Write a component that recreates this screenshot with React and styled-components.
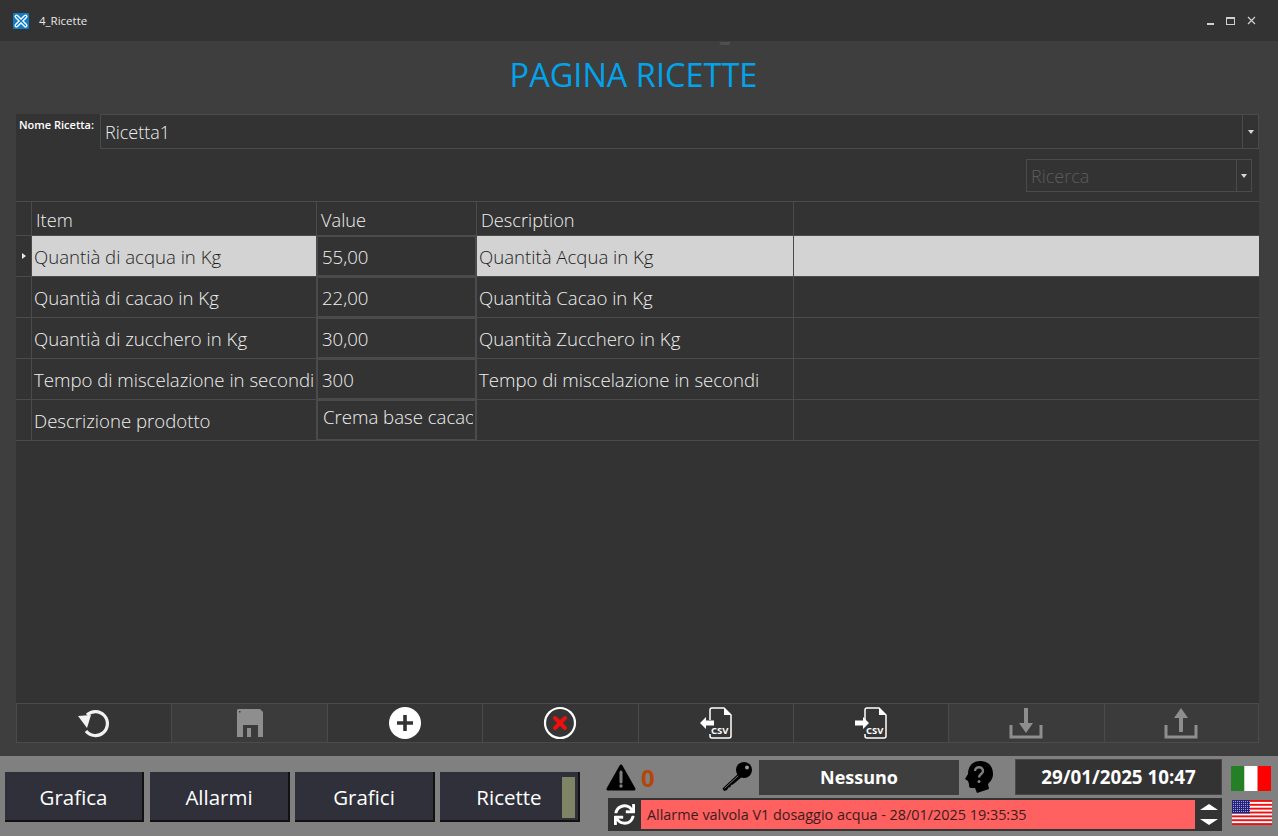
import React from 'react';
import styled, { createGlobalStyle } from 'styled-components';
import { FaSync } from 'react-icons/fa';

const GlobalStyle = createGlobalStyle`
	* {
		box-sizing: border-box;
	}
	html,
	body {
		margin: 0;
		height: 100%;
		overflow: hidden;
		background: #3e3e3e;
		font-family: 'Open Sans', 'Noto Sans', sans-serif;
	}
`;

const rows = [
	{ item: 'Quantià di acqua in Kg', value: '55,00', description: 'Quantità Acqua in Kg' },
	{ item: 'Quantià di cacao in Kg', value: '22,00', description: 'Quantità Cacao in Kg' },
	{ item: 'Quantià di zucchero in Kg', value: '30,00', description: 'Quantità Zucchero in Kg' },
	{ item: 'Tempo di miscelazione in secondi', value: '300', description: 'Tempo di miscelazione in secondi' },
	{ item: 'Descrizione prodotto', value: 'Crema base cacao', description: '' },
];

function LogoIcon() {
	return (
		<svg width="16" height="16" viewBox="0 0 16 16">
			<rect width="16" height="16" rx="1" fill="#0f7cc6" />
			<path d="M3.500 3.500l9 9M12.500 3.500l-9 9" stroke="#fff" strokeWidth="4" strokeLinecap="round" />
			<path d="M3.500 3.500l9 9M12.500 3.500l-9 9" stroke="#0f7cc6" strokeWidth="1.400" strokeLinecap="round" />
		</svg>
	);
}

function UndoIcon() {
	return (
		<svg width="34" height="32" viewBox="0 0 34 32">
			<path d="M10 8a12 12 0 1 1-1 16" fill="none" stroke="#f2f2f2" strokeWidth="3.2" />
			<path d="M1 9l13-1-4 13z" fill="#f2f2f2" />
		</svg>
	);
}

function SaveIcon() {
	return (
		<svg width="28" height="30" viewBox="0 0 28 30">
			<path d="M2 1h22l3 3v25H1V2z" fill="#8e8e8e" />
			<rect x="7" y="17" width="15" height="12" fill="#3b3b3b" />
			<rect x="11" y="20" width="4" height="9" fill="#8e8e8e" />
			<rect x="3" y="3" width="1.5" height="1.5" fill="#3b3b3b" />
		</svg>
	);
}

function PlusIcon() {
	return (
		<svg width="34" height="34" viewBox="0 0 34 34">
			<circle cx="17" cy="17" r="16" fill="#fff" />
			<path d="M17 9v16M9 17h16" stroke="#333" strokeWidth="3.6" />
		</svg>
	);
}

function RemoveIcon() {
	return (
		<svg width="34" height="34" viewBox="0 0 34 34">
			<circle cx="17" cy="17" r="15" fill="none" stroke="#fff" strokeWidth="2.2" />
			<path d="M12 12l10 10M22 12L12 22" stroke="#ee0f0f" strokeWidth="4" strokeLinecap="round" />
		</svg>
	);
}

function CsvIcon({ direction }) {
	return (
		<svg width="34" height="34" viewBox="0 0 34 34">
			<path
				d="M11 14V4a2 2 0 0 1 2-2h12l7 7v21a2 2 0 0 1-2 2H13a2 2 0 0 1-2-2v-2"
				fill="none"
				stroke="#fff"
				strokeWidth="1.5"
			/>
			<path d="M25 2v7h7z" fill="#fff" />
			{direction === 'in' ? (
				<path d="M1 17l6-6v3.500h8v5H7V23z" fill="#fff" />
			) : (
				<path d="M15 17l-6-6v3.500H1v5h8V23z" fill="#fff" />
			)}
			<text x="12" y="28" fontSize="9.500" fontWeight="700" fill="#fff" fontFamily="'Open Sans', sans-serif">
				CSV
			</text>
		</svg>
	);
}

function TrayIcon({ up }) {
	return (
		<svg width="34" height="32" viewBox="0 0 34 32">
			<path d="M2 18v12h30V18" fill="none" stroke="#8e8e8e" strokeWidth="3" />
			{up ? (
				<path d="M17 1l7 10h-5v14h-4V11h-5z" fill="#8e8e8e" />
			) : (
				<path d="M17 26l-7-10h5V1h4v15h5z" fill="#8e8e8e" />
			)}
		</svg>
	);
}

function WarningIcon() {
	return (
		<svg width="30" height="27" viewBox="0 0 30 27">
			<path d="M15 2L2 25h26z" fill="#000" stroke="#000" strokeWidth="3" strokeLinejoin="round" />
			<path d="M15 8v10" stroke="#808080" strokeWidth="3" strokeLinecap="round" />
			<circle cx="15" cy="22" r="1.700" fill="#808080" />
		</svg>
	);
}

function KeyIcon() {
	return (
		<svg width="32" height="32" viewBox="0 0 32 32">
			<path d="M19 11L1.500 27.500 3 30l3-1 1.500-2.500 2-.5.5-2 2-.5L23 14z" fill="#000" />
			<path d="M3.500 27.500L18 14" stroke="#808080" strokeWidth="0.9" />
			<circle cx="23" cy="9" r="8" fill="#000" />
			<circle cx="26" cy="6.500" r="2" fill="#9a9a9a" />
		</svg>
	);
}

function HeadIcon() {
	return (
		<svg width="28" height="32" viewBox="0 0 28 32">
			<path
				d="M15 0C23 0 28 5 28 13c0 5-3 8-5 10l1 5-12 4-2-5H6c-2 0-2-2-2-4l-1-3-3-2 3-5C3 5 8 0 15 0z"
				fill="#000"
			/>
			<path d="M10 10c0-5 8-5 8 0 0 3-4 3-4 6.500" fill="none" stroke="#808080" strokeWidth="2.400" />
			<circle cx="14" cy="20.500" r="1.500" fill="#808080" />
		</svg>
	);
}

function ItalianFlag() {
	return (
		<svg width="40" height="25" viewBox="0 0 3 2" preserveAspectRatio="none">
			<rect width="1" height="2" fill="#248024" />
			<rect x="1" width="1" height="2" fill="#fff" />
			<rect x="2" width="1" height="2" fill="#ff0000" />
		</svg>
	);
}

function UsFlag() {
	const stripes = [0, 1, 2, 3, 4, 5, 6];
	const stars = [];
	for (let y = 0; y < 6; y++) {
		for (let x = 0; x < 9; x++) {
			stars.push(<circle key={`${x}-${y}`} cx={1.5 + x * 2} cy={1.4 + y * 2} r="0.5" fill="#c9c9e8" />);
		}
	}
	return (
		<svg width="40" height="25" viewBox="0 0 40 25" preserveAspectRatio="none">
			<rect width="40" height="25" fill="#fff" />
			{stripes.map((i) => (
				<rect key={i} y={i * 3.85} width="40" height="1.920" fill="#f01010" />
			))}
			<rect width="18" height="13.500" fill="#23237e" />
			{stars}
		</svg>
	);
}

function App() {
	return (
		<Page>
			<GlobalStyle />
			<TitleBar>
				<LogoIcon />
				<WindowTitle>4_Ricette</WindowTitle>
				<WindowControls>
					<Minimize />
					<Maximize />
					<svg width="9" height="9" viewBox="0 0 9 9">
						<path d="M1 1l7 7M8 1L1 8" stroke="#d0d0d0" strokeWidth="1.200" />
					</svg>
				</WindowControls>
			</TitleBar>

			<Main>
				<PageTitle>PAGINA RICETTE</PageTitle>
				<Panel>
					<RecipeRow>
						<RecipeLabel>Nome Ricetta:</RecipeLabel>
						<Combo>
							<ComboText>Ricetta1</ComboText>
							<ComboArrow />
						</Combo>
					</RecipeRow>
					<SearchRow>
						<SearchCombo>
							<SearchText>Ricerca</SearchText>
							<ComboArrow $small />
						</SearchCombo>
					</SearchRow>
					<Table>
						<HeaderRow>
							<RowMark />
							<HeaderCell>Item</HeaderCell>
							<HeaderCell>Value</HeaderCell>
							<HeaderCell>Description</HeaderCell>
							<HeaderCell />
						</HeaderRow>
						{rows.map((row, index) => (
							<Row key={row.item}>
								<RowMark>{index === 0 && <Caret />}</RowMark>
								<Cell $selected={index === 0}>{row.item}</Cell>
								<ValueCell $top={index === 4}>
									<ValueText>{row.value}</ValueText>
								</ValueCell>
								<Cell $selected={index === 0}>{row.description}</Cell>
								<Cell $selected={index === 0} />
							</Row>
						))}
					</Table>
				</Panel>
				<Toolbar>
					<ToolButton><UndoIcon /></ToolButton>
					<ToolButton $disabled><SaveIcon /></ToolButton>
					<ToolButton><PlusIcon /></ToolButton>
					<ToolButton><RemoveIcon /></ToolButton>
					<ToolButton><CsvIcon direction="in" /></ToolButton>
					<ToolButton><CsvIcon direction="out" /></ToolButton>
					<ToolButton $disabled><TrayIcon /></ToolButton>
					<ToolButton $disabled><TrayIcon up /></ToolButton>
				</Toolbar>
			</Main>

			<BottomBar>
				<NavGroup>
					<NavButton>Grafica</NavButton>
					<NavButton>Allarmi</NavButton>
					<NavButton>Grafici</NavButton>
					<NavButton $active>
						Ricette
						<ActiveMark />
					</NavButton>
				</NavGroup>
				<StatusArea>
					<StatusRow>
						<WarningIcon />
						<AlarmCount>0</AlarmCount>
						<KeySlot><KeyIcon /></KeySlot>
						<UserBox>Nessuno</UserBox>
						<HeadSlot><HeadIcon /></HeadSlot>
						<DateBox>29/01/2025 10:47</DateBox>
					</StatusRow>
					<AlarmRow>
						<RefreshSlot><FaSync size={21} color="#fff" /></RefreshSlot>
						<AlarmText>Allarme valvola V1 dosaggio acqua - 28/01/2025 19:35:35</AlarmText>
						<ScrollSlot>
							<ScrollArrow />
							<ScrollArrow $down />
						</ScrollSlot>
					</AlarmRow>
				</StatusArea>
				<Flags>
					<ItalianFlag />
					<UsFlag />
				</Flags>
			</BottomBar>
		</Page>
	);
}
export default App;

const Page = styled.div`
	width: 1278px;
	height: 836px;
	display: flex;
	flex-direction: column;
	overflow: hidden;
`;
const TitleBar = styled.div`
	height: 41px;
	flex-shrink: 0;
	display: flex;
	align-items: center;
	padding: 0 22px 0 13px;
	background-color: #333333;
`;
const WindowTitle = styled.span`
	margin-left: 10px;
	font-size: 11.5px;
	color: #e8e8e8;
`;
const WindowControls = styled.div`
	margin-left: auto;
	display: flex;
	align-items: center;
	gap: 12px;
`;
const Minimize = styled.div`
	width: 7px;
	height: 2px;
	margin-top: 6px;
	background-color: #d0d0d0;
`;
const Maximize = styled.div`
	width: 9px;
	height: 8px;
	border: 1px solid #d0d0d0;
	border-top-width: 2px;
`;
const Main = styled.div`
	flex: 1;
	min-height: 0;
	display: flex;
	flex-direction: column;
	padding: 0 19px 13px 16px;
	background-color: #3e3e3e;
`;
const PageTitle = styled.h1`
	position: relative;
	height: 73px;
	margin: 0;
	padding-right: 8px;
	flex-shrink: 0;
	text-align: center;
	line-height: 68px;
	font-size: 32.5px;
	font-weight: 400;
	color: #03a3ea;
	&::before {
		content: '';
		position: absolute;
		left: 703px;
		top: 1px;
		width: 12px;
		height: 3px;
		background-color: #4f4f4f;
		clip-path: polygon(0 0, 100% 0, 85% 100%, 15% 100%);
	}
`;
const Panel = styled.div`
	flex: 1;
	min-height: 0;
	background-color: #333333;
`;
const RecipeRow = styled.div`
	height: 35px;
	display: flex;
`;
const RecipeLabel = styled.label`
	width: 84px;
	padding: 3px 0 0 3px;
	font-size: 11px;
	font-weight: 600;
	white-space: nowrap;
	color: #ffffff;
`;
const Combo = styled.div`
	flex: 1;
	display: flex;
	align-items: center;
	border: 1px solid #4b4b4b;
`;
const ComboText = styled.span`
	flex: 1;
	padding: 1px 0 0 4px;
	font-size: 18px;
	font-weight: 300;
	color: #ececec;
`;
const ComboArrow = styled.div`
	position: relative;
	align-self: stretch;
	width: ${(props) => (props.$small ? '15px' : '16px')};
	border-left: 1px solid #4b4b4b;
	&::after {
		content: '';
		position: absolute;
		left: 50%;
		top: 50%;
		margin: -2px 0 0 -3px;
		border-left: 3px solid transparent;
		border-right: 3px solid transparent;
		border-top: 4px solid #d8d8d8;
	}
`;
const SearchRow = styled.div`
	height: 52px;
	display: flex;
	justify-content: flex-end;
	padding: 10px 7px 9px 0;
`;
const SearchCombo = styled.div`
	width: 226px;
	display: flex;
	align-items: center;
	border: 1px solid #4b4b4b;
`;
const SearchText = styled.span`
	flex: 1;
	padding: 1px 0 0 4px;
	font-size: 18px;
	font-weight: 300;
	color: #5c5c5c;
`;
const Table = styled.div`
	border-top: 1px solid #4b4b4b;
`;
const Row = styled.div`
	display: grid;
	grid-template-columns: 16px 285px 160px 317px 1fr;
	height: 41px;
	border-bottom: 1px solid #4b4b4b;
`;
const HeaderRow = styled(Row)`
	height: 34px;
`;
const RowMark = styled.div`
	display: flex;
	align-items: center;
	justify-content: center;
	border-right: 1px solid #4b4b4b;
`;
const Caret = styled.div`
	border-top: 3px solid transparent;
	border-bottom: 3px solid transparent;
	border-left: 4px solid #e8e8e8;
`;
const HeaderCell = styled.div`
	padding-left: 4px;
	line-height: 37px;
	font-size: 18.2px;
	font-weight: 300;
	color: #f0f0f0;
	border-right: 1px solid #4b4b4b;
	&:last-child {
		border-right: none;
	}
`;
const Cell = styled.div`
	padding: 2px 0 0 2px;
	line-height: 38px;
	font-size: 18.6px;
	font-weight: 300;
	white-space: nowrap;
	overflow: hidden;
	color: ${(props) => (props.$selected ? '#1f1f1f' : '#f0f0f0')};
	background-color: ${(props) => (props.$selected ? '#d3d3d3' : 'transparent')};
	border-right: 1px solid #4b4b4b;
	&:last-child {
		border-right: none;
	}
`;
const ValueCell = styled.div`
	display: flex;
	align-items: ${(props) => (props.$top ? 'flex-start' : 'center')};
	padding: ${(props) => (props.$top ? '3px 2px 0 5px' : '0 2px 0 4px')};
	border: 1px solid #4b4b4b;
	border-right-width: 2px;
	overflow: hidden;
`;
const ValueText = styled.span`
	font-size: 18.6px;
	font-weight: 300;
	white-space: nowrap;
	overflow: hidden;
	color: #f0f0f0;
`;
const Toolbar = styled.div`
	height: 40px;
	flex-shrink: 0;
	display: grid;
	grid-template-columns: repeat(8, 1fr);
	width: 1243px;
`;
const ToolButton = styled.div`
	display: flex;
	align-items: center;
	justify-content: center;
	background-color: ${(props) => (props.$disabled ? '#3b3b3b' : '#353535')};
	border: 1px solid #4b4b4b;
	border-right: none;
	&:last-child {
		border-right: 1px solid #4b4b4b;
	}
`;
const BottomBar = styled.div`
	height: 80px;
	flex-shrink: 0;
	display: flex;
	background-color: #808080;
`;
const NavGroup = styled.div`
	display: flex;
	gap: 5px;
	padding: 16px 0 14px 5px;
`;
const NavButton = styled.div`
	position: relative;
	width: 140px;
	display: flex;
	align-items: center;
	justify-content: center;
	padding-top: 2px;
	font-size: 20.5px;
	color: #ffffff;
	background-color: #30303a;
	border-right: 2px solid #111111;
	border-bottom: 2px solid #111111;
	&:first-child {
		width: 139px;
		margin-right: 1px;
	}
`;
const ActiveMark = styled.div`
	position: absolute;
	right: 3px;
	top: 5px;
	width: 13px;
	height: 41px;
	background-color: #7f8465;
`;
const StatusArea = styled.div`
	width: 616px;
	margin-left: 26px;
	padding-top: 3px;
	display: flex;
	flex-direction: column;
	gap: 3px;
`;
const StatusRow = styled.div`
	height: 36px;
	display: flex;
	align-items: center;
`;
const AlarmCount = styled.span`
	width: 80px;
	margin-left: 5px;
	font-size: 24px;
	font-weight: 700;
	color: #b4460c;
`;
const KeySlot = styled.div`
	width: 38px;
	display: flex;
`;
const UserBox = styled.div`
	width: 200px;
	height: 35px;
	display: flex;
	align-items: center;
	justify-content: center;
	font-size: 18px;
	font-weight: 700;
	color: #ffffff;
	background-color: #3e3e3e;
`;
const HeadSlot = styled.div`
	width: 56px;
	padding-left: 6px;
	display: flex;
`;
const DateBox = styled.div`
	width: 207px;
	height: 36px;
	display: flex;
	align-items: center;
	justify-content: center;
	font-size: 18.8px;
	font-weight: 700;
	color: #ffffff;
	background-color: #333333;
	border: 1px solid #484848;
`;
const AlarmRow = styled.div`
	height: 33px;
	margin-left: 2px;
	display: flex;
	align-items: stretch;
	padding: 2px 0;
	background-color: #333333;
`;
const RefreshSlot = styled.div`
	width: 33px;
	display: flex;
	align-items: center;
	justify-content: center;
`;
const AlarmText = styled.div`
	flex: 1;
	padding-left: 6px;
	line-height: 29px;
	font-size: 14.4px;
	color: #3a1c1c;
	background-color: #ff6060;
`;
const ScrollSlot = styled.div`
	width: 27px;
	display: flex;
	flex-direction: column;
	align-items: center;
	justify-content: center;
	gap: 9px;
`;
const ScrollArrow = styled.div`
	border-left: 9px solid transparent;
	border-right: 9px solid transparent;
	${(props) =>
		props.$down ? 'border-top: 6px solid #ffffff;' : 'border-bottom: 6px solid #ffffff;'}
`;
const Flags = styled.div`
	margin-left: 9px;
	padding-top: 10px;
	display: flex;
	flex-direction: column;
	gap: 9px;
	svg {
		display: block;
	}
	svg:last-child {
		margin-left: 1px;
	}
`;
